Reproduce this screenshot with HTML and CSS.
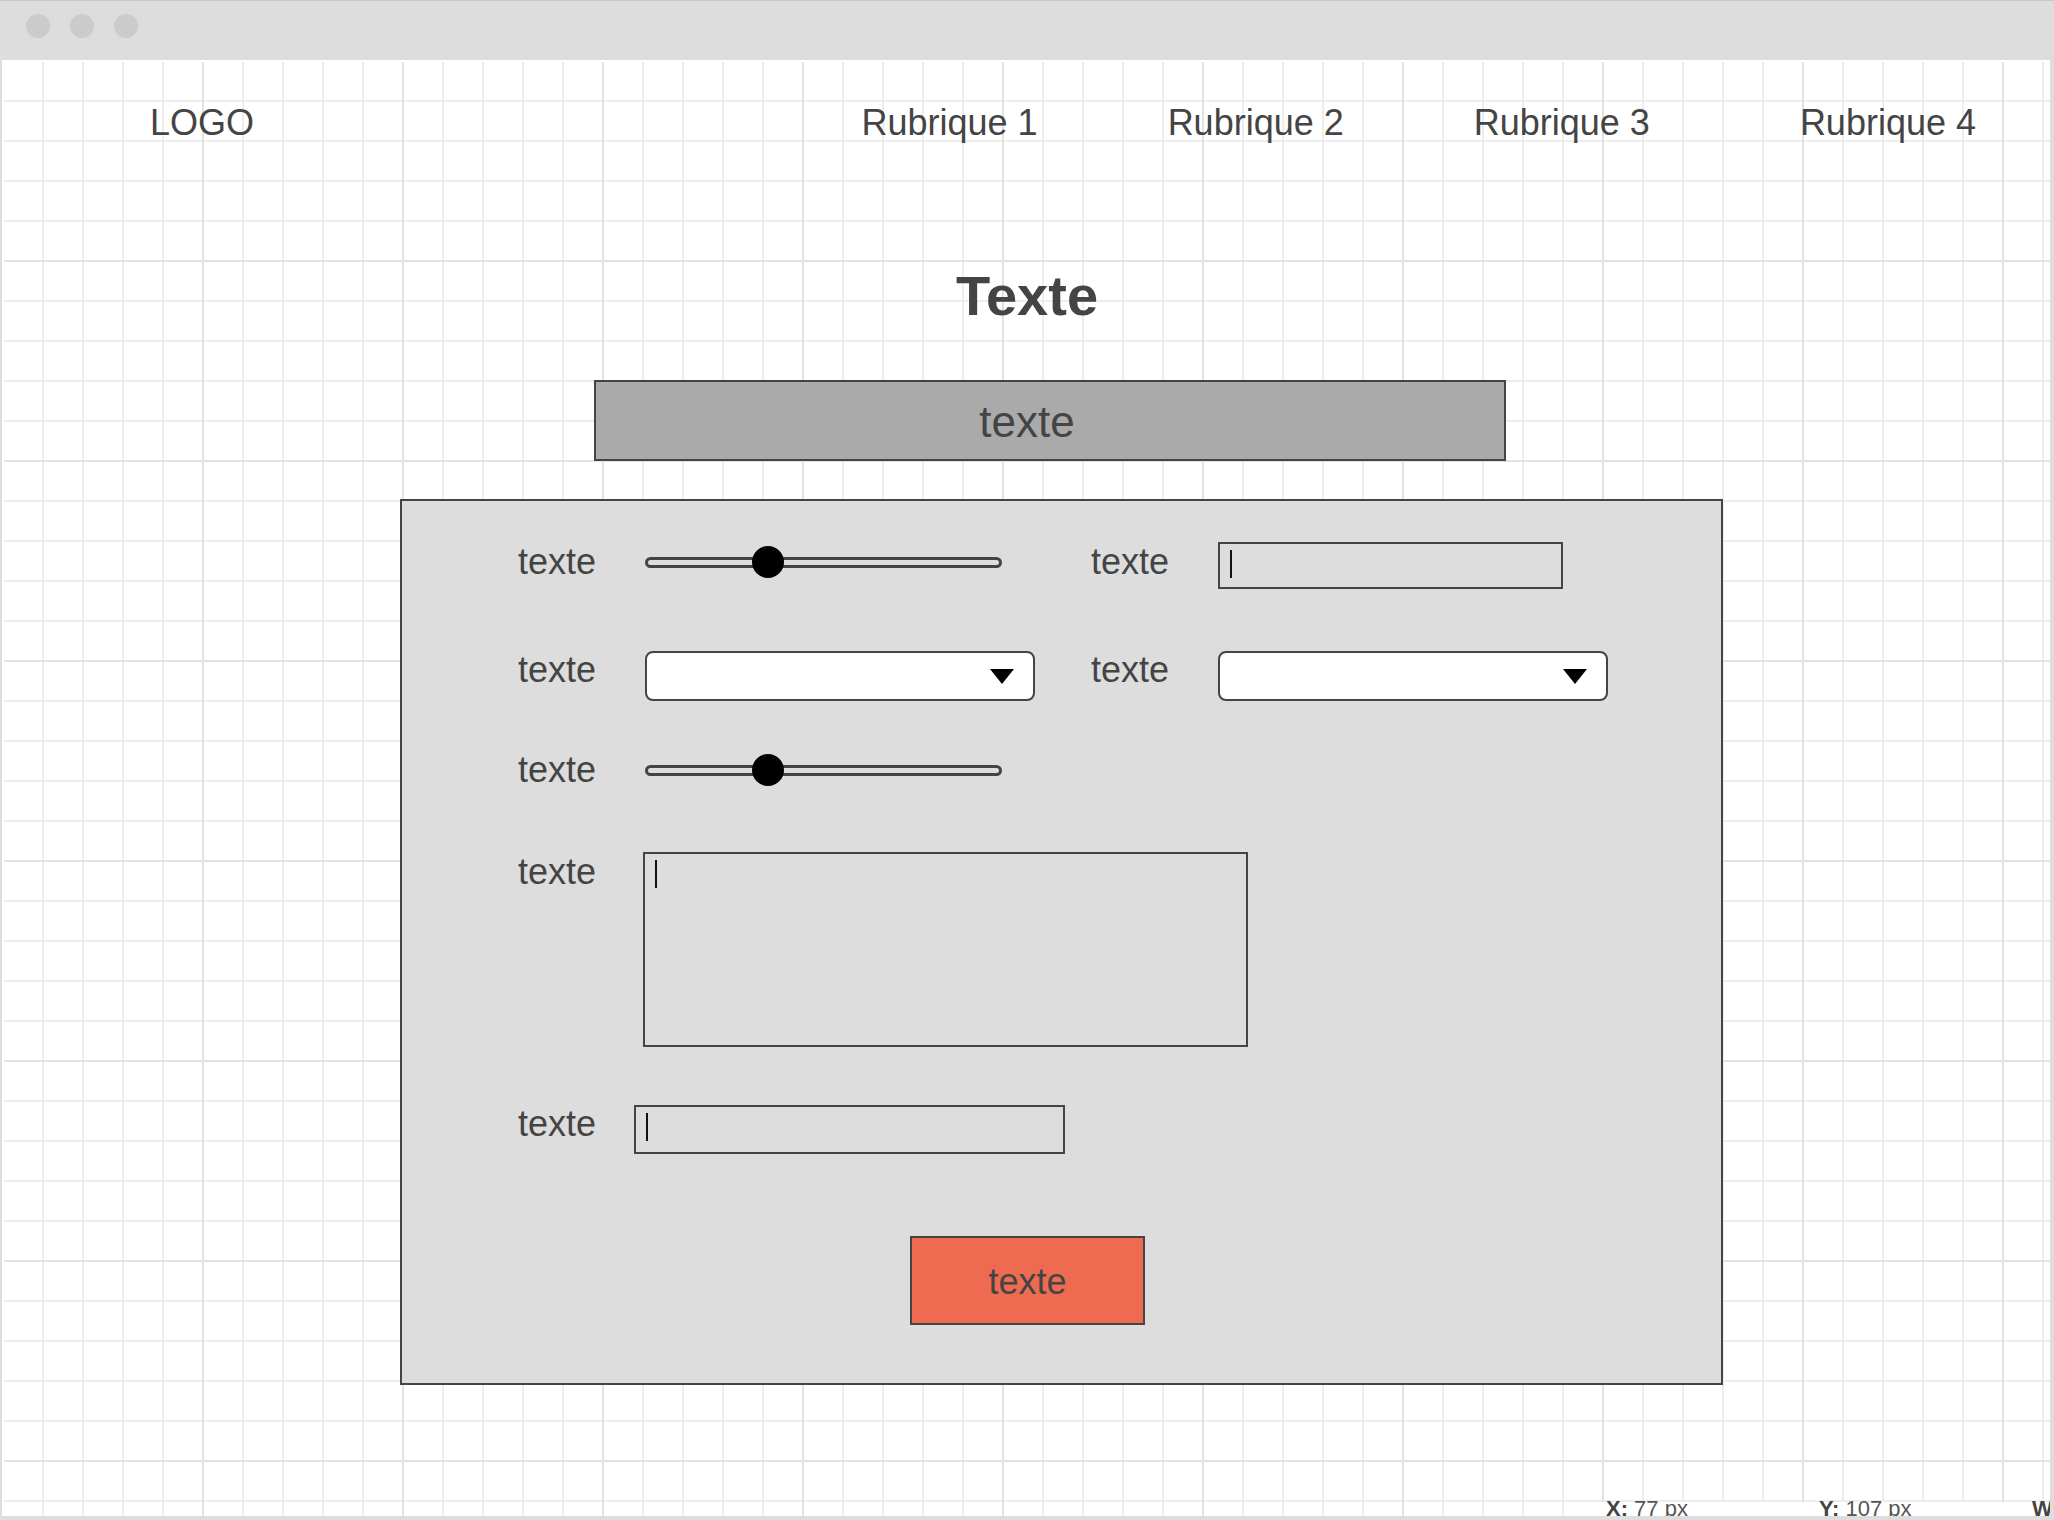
FILE: index.html
```html
<!DOCTYPE html>
<html lang="fr">
<head>
<meta charset="utf-8">
<title>Maquette</title>
<link rel="stylesheet" href="styles.css">
</head>
<body>
<div class="window">
  <div class="titlebar">
    <span class="dot"></span><span class="dot"></span><span class="dot"></span>
  </div>
  <div class="viewport">
    <header class="site-header">
      <div class="logo">LOGO</div>
      <nav class="menu">
        <a class="menu-item" href="#">Rubrique 1</a>
        <a class="menu-item" href="#">Rubrique 2</a>
        <a class="menu-item" href="#">Rubrique 3</a>
        <a class="menu-item menu-item--last" href="#">Rubrique 4</a>
      </nav>
    </header>
    <main class="content">
      <h1 class="title">Texte</h1>
      <div class="banner">texte</div>
      <form class="panel">
        <div class="pair-row">
          <span class="label">texte</span>
          <div class="slider"><div class="slider-track"></div><div class="slider-thumb"></div></div>
          <span class="label">texte</span>
          <div class="text-input text-input--short"><span class="caret"></span></div>
        </div>
        <div class="pair-row pair-row--second">
          <span class="label">texte</span>
          <div class="select"><span class="select-arrow"></span></div>
          <span class="label">texte</span>
          <div class="select"><span class="select-arrow"></span></div>
        </div>
        <div class="row row--slider">
          <span class="label label--slider">texte</span>
          <div class="slider"><div class="slider-track"></div><div class="slider-thumb"></div></div>
        </div>
        <div class="row row--area">
          <span class="label label--area">texte</span>
          <div class="textarea"><span class="caret"></span></div>
        </div>
        <div class="row row--input">
          <span class="label label--input">texte</span>
          <div class="text-input text-input--long"><span class="caret"></span></div>
        </div>
        <button class="submit" type="button">texte</button>
      </form>
    </main>
    <div class="statusbar">
      <span class="coord"><b>X:</b> 77 px</span>
      <span class="coord"><b>Y:</b> 107 px</span>
      <span class="coord"><b>W:</b> 300 px</span>
    </div>
  </div>
</div>
</body>
</html>
```
FILE: styles.css
```css
* { box-sizing: border-box; }

html, body {
  margin: 0;
  padding: 0;
}

body {
  width: 2054px;
  height: 1520px;
  overflow: hidden;
  background: #dddddd;
  font-family: "Liberation Sans", Arial, sans-serif;
  color: #444444;
}

.window {
  width: 2054px;
  height: 1520px;
  background: #dddddd;
}

.titlebar {
  height: 60px;
  display: flex;
  gap: 20px;
  padding: 14px 0 0 26px;
  box-shadow: inset 0 1px 0 #c8c8c8;
}

.dot {
  width: 24px;
  height: 24px;
  border-radius: 50%;
  background: #cbcbcb;
}

.viewport {
  position: relative;
  margin-left: 2px;
  width: 2048px;
  height: 1456px;
  overflow: hidden;
  border-top: 2px solid #ffffff;
  border-left: 2px solid #ffffff;
  background-color: #ffffff;
  background-clip: padding-box;
  background-image:
    linear-gradient(to right, transparent 198px, #e2e2e2 198px),
    linear-gradient(to bottom, transparent 198px, #e2e2e2 198px),
    linear-gradient(to right, transparent 38px, #ededed 38px),
    linear-gradient(to bottom, transparent 38px, #ededed 38px);
  background-size: 200px 200px, 200px 200px, 40px 40px, 40px 40px;
}

/* header */
.site-header {
  display: flex;
  height: 81px;
  padding: 41px 74px 0 146px;
  font-size: 36px;
  line-height: 40px;
}

.menu {
  margin-left: auto;
  display: flex;
  gap: 130px;
}

.menu-item {
  color: #444444;
  text-decoration: none;
}

.menu-item--last {
  margin-left: 20px;
}

/* main */
.title {
  margin: 125px 0 0;
  font-size: 56px;
  line-height: 56px;
  font-weight: bold;
  text-align: center;
}

.banner {
  margin: 56px 0 0 590px;
  width: 912px;
  height: 81px;
  border: 2px solid #444444;
  background: #aaaaaa;
  font-size: 44px;
  line-height: 75px;
  padding: 2px 46px 0 0;
  text-align: center;
}

.panel {
  margin: 38px 0 0 396px;
  width: 1323px;
  height: 886px;
  border: 2px solid #444444;
  background: #dddddd;
  padding: 40px 0 0 116px;
  display: flex;
  flex-direction: column;
  align-items: flex-start;
}

.label {
  font-size: 36px;
  line-height: 42px;
  height: 40px;
  flex: none;
}

.pair-row {
  display: grid;
  grid-template-columns: 127px 446px 127px auto;
  align-items: start;
}

.pair-row--second {
  margin-top: 60px;
}

.slider {
  position: relative;
  width: 357px;
  height: 32px;
  margin-top: 5px;
  display: flex;
  align-items: center;
}

.slider-track {
  width: 100%;
  height: 11px;
  border: 3px solid #444444;
  border-radius: 6px;
  background: #dddddd;
}

.slider-thumb {
  position: absolute;
  left: 107px;
  top: 0;
  width: 32px;
  height: 32px;
  border-radius: 50%;
  background: #000000;
}

.text-input {
  display: flex;
  align-items: flex-start;
  height: 47px;
  margin-top: 1px;
  border: 2px solid #444444;
  padding: 6px 0 0 10px;
}

.text-input--short { width: 345px; }

.text-input--long {
  width: 431px;
  height: 49px;
  margin-top: 2px;
}

.caret {
  display: block;
  width: 2px;
  height: 28px;
  background: #111111;
}

.select {
  width: 390px;
  height: 50px;
  margin-top: 2px;
  background: #ffffff;
  border: 2px solid #444444;
  border-radius: 8px;
  display: flex;
  justify-content: flex-end;
  align-items: center;
  padding-right: 19px;
}

.select-arrow {
  width: 0;
  height: 0;
  border-left: 12px solid transparent;
  border-right: 12px solid transparent;
  border-top: 15px solid #000000;
}

.row {
  display: flex;
  align-items: flex-start;
}

.row--slider { margin-top: 48px; }
.label--slider { width: 127px; }

.row--area { margin-top: 62px; }
.label--area { width: 125px; }

.textarea {
  display: flex;
  align-items: flex-start;
  width: 605px;
  height: 195px;
  margin-top: 1px;
  border: 2px solid #444444;
  padding: 6px 0 0 10px;
}

.row--input { margin-top: 56px; }
.label--input { width: 116px; }

.submit {
  margin: 82px 0 0 392px;
  width: 235px;
  height: 89px;
  padding: 2px 0 0;
  border: 2px solid #444444;
  background: #ee6b51;
  font-family: "Liberation Sans", Arial, sans-serif;
  font-size: 36px;
  line-height: 40px;
  color: #444444;
}

/* status bar */
.statusbar {
  position: absolute;
  left: 1593px;
  top: 1440px;
  right: 0;
  bottom: 0;
  background: #ffffff;
  display: flex;
  padding-left: 9px;
  font-size: 22px;
  line-height: 22px;
  color: #555555;
}

.coord {
  flex: none;
  width: 213px;
  margin-top: -4px;
  white-space: nowrap;
}

.coord b {
  color: #444444;
}
```
